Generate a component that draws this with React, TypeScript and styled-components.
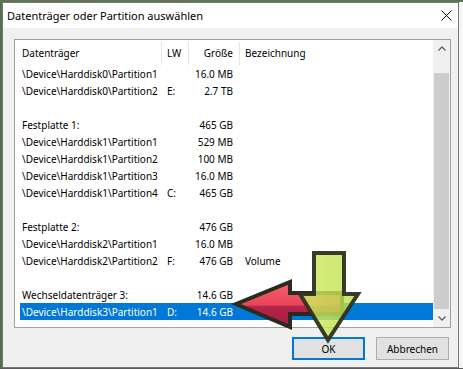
import React from "react";
import styled, { createGlobalStyle } from "styled-components";

const GlobalStyle = createGlobalStyle`
  html, body { margin: 0; padding: 0; }
  body { background: #ececec; font-family: "Noto Sans", "Open Sans", sans-serif; }
  * { box-sizing: border-box; }
`;

const Page = styled.div`
  position: relative;
  width: 463px;
  height: 369px;
  overflow: hidden;
  padding: 2px 0 0 2px;
  background:
    linear-gradient(0deg, #5a5a5a 0 1px, transparent 1px),
    linear-gradient(180deg, #5e7352 0 2px, transparent 2px),
    linear-gradient(90deg, #56704a 0 2px, #f6f6f6 2px);
`;

const Dialog = styled.div`
  width: 457px;
  height: 366px;
  border: 1px solid #767676;
  background: #f0f0f0;
  display: flex;
  flex-direction: column;
`;

const TitleBar = styled.div`
  height: 25px;
  flex: none;
  background: #ffffff;
  display: flex;
  align-items: center;
  justify-content: space-between;
  padding: 0 6px 0 4px;
  font-size: 11px;
  color: #000;
`;

const CloseButton = styled.div`
  width: 12px;
  height: 12px;
  display: flex;
  align-items: center;
  justify-content: center;
`;

const Body = styled.div`
  flex: 1;
  display: flex;
  flex-direction: column;
  padding: 11px 7px 7px 11px;
`;

const ListBox = styled.div`
  height: 289px;
  flex: none;
  border: 1px solid #a0a0a0;
  background: #ffffff;
  display: flex;
`;

const ListArea = styled.div`
  flex: 1;
  padding-left: 5px;
  display: flex;
  flex-direction: column;
  font-size: 10px;
  color: #000;
`;

const Columns = "142px 27px 51px 1fr";

const HeaderRow = styled.div`
  height: 25px;
  padding-top: 2px;
  display: grid;
  grid-template-columns: ${Columns};
`;

const HeaderCell = styled.div<{ $align?: "left" | "right"; $pl?: number; $pr?: number; $last?: boolean }>`
  display: flex;
  align-items: center;
  justify-content: ${(p) => (p.$align === "right" ? "flex-end" : "flex-start")};
  padding-left: ${(p) => p.$pl ?? 0}px;
  padding-right: ${(p) => p.$pr ?? 0}px;
  border-right: ${(p) => (p.$last ? "none" : "1px solid #e5e5e5")};
  padding-bottom: 2px;
  white-space: nowrap;
`;

const Row = styled.div<{ $selected?: boolean }>`
  height: 17px;
  display: grid;
  grid-template-columns: ${Columns};
  background: ${(p) => (p.$selected ? "#0078d7" : "transparent")};
  color: ${(p) => (p.$selected ? "#ffffff" : "#000000")};
`;

const Cell = styled.div<{ $align?: "left" | "right"; $pl?: number; $pr?: number }>`
  display: flex;
  align-items: center;
  justify-content: ${(p) => (p.$align === "right" ? "flex-end" : "flex-start")};
  padding-left: ${(p) => p.$pl ?? 0}px;
  padding-right: ${(p) => p.$pr ?? 0}px;
  white-space: nowrap;
  overflow: visible;
`;

const ScrollBar = styled.div`
  width: 17px;
  flex: none;
  background: #f0f0f0;
  display: flex;
  flex-direction: column;
`;

const ArrowButton = styled.div`
  height: 17px;
  flex: none;
  display: flex;
  align-items: center;
  justify-content: center;
`;

const Track = styled.div`
  flex: 1;
  display: flex;
  flex-direction: column;
  padding: 16px 1px 1px 1px;
`;

const Thumb = styled.div`
  flex: 1;
  background: #cdcdcd;
`;

const ButtonRow = styled.div`
  margin-top: 9px;
  display: flex;
  justify-content: flex-end;
  gap: 11px;
  padding-right: 2px;
`;

const Button = styled.div<{ $default?: boolean }>`
  width: 73px;
  height: 23px;
  display: flex;
  align-items: center;
  justify-content: center;
  font-size: 10px;
  color: #000;
  background: #e1e1e1;
  border: ${(p) => (p.$default ? "2px solid #0078d7" : "1px solid #adadad")};
`;

const Overlay = styled.svg`
  position: absolute;
  left: 0;
  top: 0;
  width: 463px;
  height: 369px;
  pointer-events: none;
`;

type RowData = { name: string; lw: string; size: string; label: string; selected?: boolean } | null;

const rows: RowData[] = [
  { name: "\\Device\\Harddisk0\\Partition1", lw: "", size: "16.0 MB", label: "" },
  { name: "\\Device\\Harddisk0\\Partition2", lw: "E:", size: "2.7 TB", label: "" },
  null,
  { name: "Festplatte 1:", lw: "", size: "465 GB", label: "" },
  { name: "\\Device\\Harddisk1\\Partition1", lw: "", size: "529 MB", label: "" },
  { name: "\\Device\\Harddisk1\\Partition2", lw: "", size: "100 MB", label: "" },
  { name: "\\Device\\Harddisk1\\Partition3", lw: "", size: "16.0 MB", label: "" },
  { name: "\\Device\\Harddisk1\\Partition4", lw: "C:", size: "465 GB", label: "" },
  null,
  { name: "Festplatte 2:", lw: "", size: "476 GB", label: "" },
  { name: "\\Device\\Harddisk2\\Partition1", lw: "", size: "16.0 MB", label: "" },
  { name: "\\Device\\Harddisk2\\Partition2", lw: "F:", size: "476 GB", label: "Volume" },
  null,
  { name: "Wechseldatenträger 3:", lw: "", size: "14.6 GB", label: "" },
  { name: "\\Device\\Harddisk3\\Partition1", lw: "D:", size: "14.6 GB", label: "", selected: true },
];

export default function App() {
  return (
    <>
      <GlobalStyle />
      <Page>
        <Dialog>
          <TitleBar>
            <span>Datenträger oder Partition auswählen</span>
            <CloseButton>
              <svg width="11" height="11" viewBox="0 0 11 11">
                <path d="M0.5 0.5 L10.5 10.5 M10.5 0.5 L0.5 10.5" stroke="#111" strokeWidth="1" fill="none" />
              </svg>
            </CloseButton>
          </TitleBar>
          <Body>
            <ListBox>
              <ListArea>
                <HeaderRow>
                  <HeaderCell $pl={2}>Datenträger</HeaderCell>
                  <HeaderCell $pl={5}>LW</HeaderCell>
                  <HeaderCell $align="right" $pr={6}>Größe</HeaderCell>
                  <HeaderCell $pl={5} $last>Bezeichnung</HeaderCell>
                </HeaderRow>
                {rows.map((r, i) =>
                  r ? (
                    <Row key={i} $selected={r.selected}>
                      <Cell $pl={2}>{r.name}</Cell>
                      <Cell $pl={5}>{r.lw}</Cell>
                      <Cell $align="right" $pr={7}>{r.size}</Cell>
                      <Cell $pl={5}>{r.label}</Cell>
                    </Row>
                  ) : (
                    <Row key={i} />
                  )
                )}
              </ListArea>
              <ScrollBar>
                <ArrowButton>
                  <svg width="8" height="5" viewBox="0 0 8 5">
                    <polyline points="0.5,4.5 4,1 7.5,4.5" stroke="#606060" strokeWidth="1.3" fill="none" />
                  </svg>
                </ArrowButton>
                <Track>
                  <Thumb />
                </Track>
                <ArrowButton>
                  <svg width="8" height="5" viewBox="0 0 8 5">
                    <polyline points="0.5,0.5 4,4 7.5,0.5" stroke="#606060" strokeWidth="1.3" fill="none" />
                  </svg>
                </ArrowButton>
              </ScrollBar>
            </ListBox>
            <ButtonRow>
              <Button $default>OK</Button>
              <Button>Abbrechen</Button>
            </ButtonRow>
          </Body>
        </Dialog>
        <Overlay viewBox="0 0 463 369">
          <defs>
            <linearGradient id="redFill" x1="0" y1="0" x2="0" y2="1">
              <stop offset="0" stopColor="#f5616a" />
              <stop offset="0.5" stopColor="#e8465a" />
              <stop offset="0.55" stopColor="#b8244a" />
              <stop offset="1" stopColor="#a01c40" />
            </linearGradient>
            <linearGradient id="greenFill" x1="0" y1="0" x2="1" y2="0">
              <stop offset="0" stopColor="#d2ee62" />
              <stop offset="1" stopColor="#bede4c" />
            </linearGradient>
          </defs>
          <polygon
            points="236,304 290,282 290,293 342,293 342,314 290,314 290,327"
            fill="url(#redFill)"
            stroke="#2a2a1e"
            strokeWidth="4"
            strokeLinejoin="miter"
          />
          <polygon
            points="314,253 344,253 344,294 358,294 328,340 300,294 314,294"
            fill="url(#greenFill)"
            fillOpacity="0.82"
            stroke="#2e3220"
            strokeWidth="4"
            strokeOpacity="0.95"
            strokeLinejoin="miter"
          />
        </Overlay>
      </Page>
    </>
  );
}
